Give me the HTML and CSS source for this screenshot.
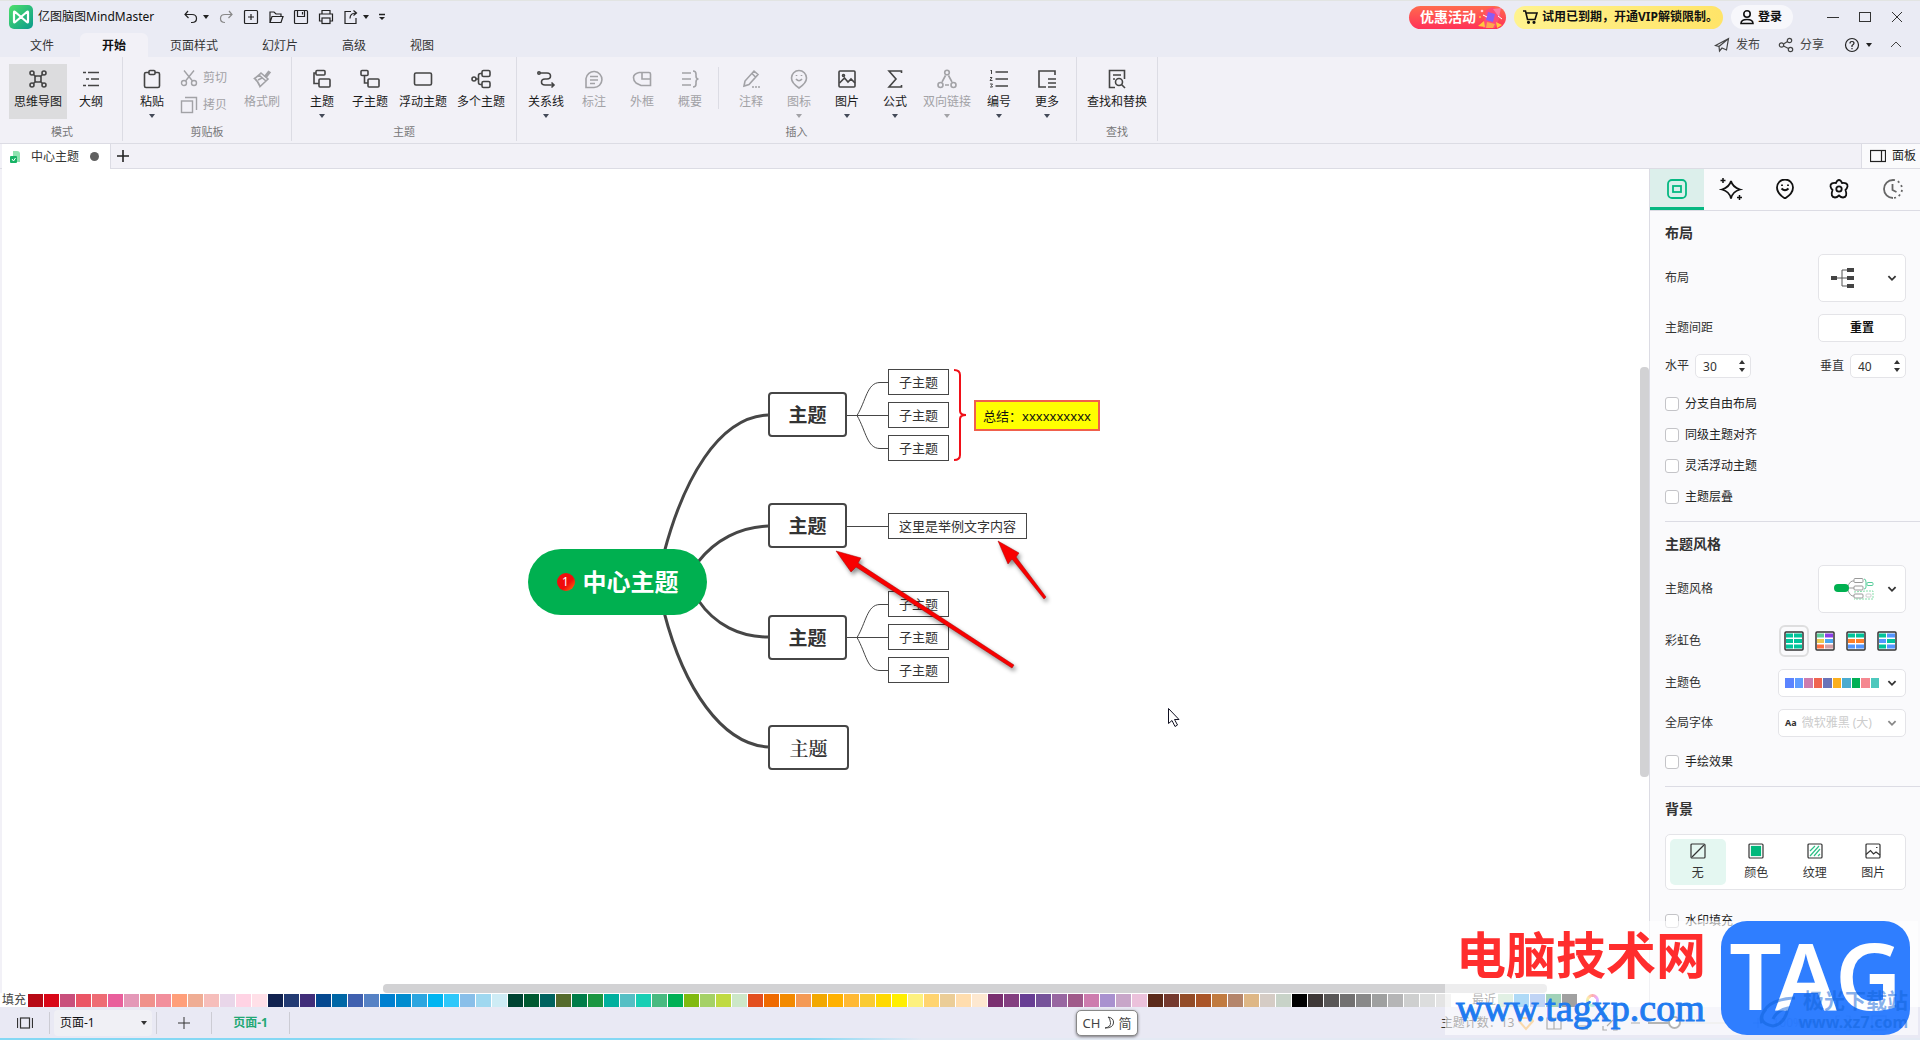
FILE: index.html
```html
<!DOCTYPE html>
<html lang="zh-CN">
<head>
<meta charset="utf-8">
<title>亿图脑图MindMaster</title>
<link rel="stylesheet" href="styles.css">
</head>
<body>
<svg class="defs" aria-hidden="true">
  <symbol id="caret" viewBox="0 0 6 4"><path d="M0 0h6L3 4z" fill="currentColor"/></symbol>
  <symbol id="chev" viewBox="0 0 10 10"><path d="M2 3.500l3 3 3-3" fill="none" stroke="currentColor" stroke-width="1.500"/></symbol>
  <symbol id="picture" viewBox="0 0 20 20"><rect x="2" y="2" width="16" height="16" rx="1"/><circle cx="6.500" cy="6.500" r="1"/><path d="M2.500 14l5-5 3.500 4 3-3 4 4"/></symbol>
</svg>
<div class="app">
  <header class="titlebar">
    <div class="title-row">
      <svg class="logo" viewBox="0 0 24 24"><defs><linearGradient id="lg" x1="0" y1="0" x2="1" y2="1"><stop offset="0" stop-color="#4ee06a"/><stop offset="1" stop-color="#0a9a8c"/></linearGradient></defs><rect width="24" height="24" rx="5" fill="url(#lg)"/><path d="M5 17V7.500q0-1.500 1.200-.5l11.600 10q1.200 1 1.200-.5V7.500q0-1.500-1.200-.5L6.200 17Q5 18 5 16.500z" fill="none" stroke="#fff" stroke-width="2.200" stroke-linejoin="round"/></svg>
      <h1 class="app-name">亿图脑图MindMaster</h1>
      <nav class="quick">
        <button class="qb" aria-label="撤销"><svg class="ic16" viewBox="0 0 16 16"><path d="M5 2L2 5.500 5.500 9M2.500 5.500H9q4.500 0 4.500 4T9 13.500H8"/></svg><svg class="caret"><use href="#caret"/></svg></button>
        <button class="qb dim" aria-label="重做"><svg class="ic16" viewBox="0 0 16 16"><path d="M11 2l3 3.500L10.500 9M13.500 5.500H7q-4.500 0-4.500 4T7 13.500"/></svg></button>
        <button class="qb" aria-label="新建"><svg class="ic16" viewBox="0 0 16 16"><rect x="1.500" y="1.500" width="13" height="13" rx="1"/><path d="M8 5v6M5 8h6"/></svg></button>
        <button class="qb" aria-label="打开"><svg class="ic16" viewBox="0 0 16 16"><path d="M2 13.500V3h4l2 2h5v2.500M2 13.500L4 7.500h11l-2 6z"/></svg></button>
        <button class="qb" aria-label="保存"><svg class="ic16" viewBox="0 0 16 16"><rect x="1.500" y="1.500" width="13" height="13" rx="1"/><path d="M4.500 2v5.500h7V2M9.500 3v2.500"/></svg></button>
        <button class="qb" aria-label="打印"><svg class="ic16" viewBox="0 0 16 16"><path d="M4 5V1.500h8V5M4 12H1.500V5h13v7H12"/><rect x="4" y="9" width="8" height="5.500"/></svg></button>
        <button class="qb" aria-label="导出"><svg class="ic16" viewBox="0 0 16 16"><path d="M8 2.500H2v12h11V9M7 9.500Q7 4 13 4M10.500 1.500L13.500 4l-3 2.500"/></svg><svg class="caret"><use href="#caret"/></svg></button>
        <button class="qb small" aria-label="自定义"><svg class="more-ic" viewBox="0 0 8 8"><path d="M1 1.500h6" /><path d="M1 4h6L4 7z" fill="currentColor" stroke="none"/></svg></button>
      </nav>
      <div class="title-right">
        <button class="promo">优惠活动<svg class="gift" viewBox="0 0 28 23"><path d="M10 4l7-3 8 8-6 13H7z" fill="#ff4b78"/><path d="M12 6l7 2-2 8-7-2z" fill="#8b5cf6"/><path d="M2 20l6-5 1 6zM20 16l6 3-5 3z" fill="#ffc93c"/><path d="M17 3l8-1-2 9z" fill="#ff7ba5"/><circle cx="6" cy="5" r="1.300" fill="#ffd0e0"/><circle cx="4" cy="11" r="1" fill="#ffc93c"/><path d="M11 16l8 2-2 4h-7z" fill="#ffa74c"/><path d="M7 9l4 2M22 10l4 3" stroke="#fff" stroke-width="1"/></svg></button>
        <button class="vip"><svg class="ic16" viewBox="0 0 16 16"><path d="M1 2h2.500l2 8.500H13L15 4H4"/><circle cx="6.500" cy="13.300" r=".8"/><circle cx="12" cy="13.300" r=".8"/></svg>试用已到期，开通VIP解锁限制。</button>
        <button class="login"><svg class="ic16" viewBox="0 0 16 16"><circle cx="8" cy="5" r="3.200"/><path d="M2 14.500q0-4 6-4t6 4z"/></svg>登录</button>
        <button class="win" aria-label="最小化"><svg class="ic12" viewBox="0 0 12 12"><path d="M0 6.500h12"/></svg></button>
        <button class="win" aria-label="最大化"><svg class="ic12" viewBox="0 0 12 12"><rect x=".5" y="1.500" width="11" height="9"/></svg></button>
        <button class="win" aria-label="关闭"><svg class="ic12" viewBox="0 0 12 12"><path d="M1 1l10 10M11 1L1 11"/></svg></button>
      </div>
    </div>
    <div class="menu-row">
      <button class="menu">文件</button><button class="menu on">开始</button><button class="menu w4">页面样式</button><button class="menu w3">幻灯片</button><button class="menu">高级</button><button class="menu">视图</button>
      <div class="menu-right">
        <button class="link"><svg class="ic16" viewBox="0 0 16 16"><path d="M1.500 8.500L14.500 1.500 12.500 13 8 11l-2.500 3-.5-4.500zM5 9.500l9-7.500"/></svg>发布</button>
        <button class="link"><svg class="ic16" viewBox="0 0 16 16"><circle cx="3.500" cy="8" r="2.200"/><circle cx="11.500" cy="3.500" r="2.200"/><circle cx="12.500" cy="12.500" r="2.200"/><path d="M5.500 7l4-2.500M5.500 9l5 2.500"/></svg>分享</button>
        <button class="link help" aria-label="帮助"><svg class="ic16" viewBox="0 0 16 16"><circle cx="8" cy="8" r="6.500"/><path d="M6 6.500q0-2 2-2t2 1.800q0 1-2 2.200V10M8 11v1.200"/></svg><svg class="caret"><use href="#caret"/></svg></button>
        <button class="link" aria-label="折叠"><svg class="ic12" viewBox="0 0 12 12"><path d="M1 8l5-5 5 5"/></svg></button>
      </div>
    </div>
  </header>

  <section class="ribbon">
    <div class="group">
      <div class="tools">
        <button class="tool sel w58"><svg class="ic20" viewBox="0 0 20 20"><rect x="7" y="7" width="6" height="6" rx="1"/><circle cx="4" cy="4" r="2"/><circle cx="16" cy="4" r="2"/><circle cx="4" cy="16" r="2"/><circle cx="16" cy="16" r="2"/><path d="M5.500 5.500L8 8M14.500 5.500L12 8M5.500 14.500L8 12M14.500 14.500L12 12"/></svg><span>思维导图</span></button>
        <button class="tool"><svg class="ic20" viewBox="0 0 20 20"><path d="M2 3.500h3M7 3.500h11M5 10h3M10 10h8M2 16.500h3M7 16.500h11"/></svg><span>大纲</span></button>
      </div><p class="cap">模式</p>
    </div>
    <div class="group">
      <div class="tools">
        <button class="tool"><svg class="ic20" viewBox="0 0 20 20"><rect x="2.500" y="3.500" width="15" height="15" rx="1.500"/><rect x="7" y="1.500" width="6" height="4" rx="1" fill="#f2f1f7"/></svg><span>粘贴</span><svg class="caret"><use href="#caret"/></svg></button>
        <div class="stack">
          <button class="mini dim"><svg class="ic18" viewBox="0 0 18 18"><circle cx="4" cy="14" r="2.500"/><circle cx="14" cy="14" r="2.500"/><path d="M4 1.500l8.500 10.500M14 1.500L5.500 12"/></svg>剪切</button>
          <button class="mini dim"><svg class="ic18" viewBox="0 0 18 18"><rect x="1.500" y="5" width="11" height="11.500"/><path d="M5 1.500h11.500V14"/></svg>拷贝</button>
        </div>
        <button class="tool dim"><svg class="ic20" viewBox="0 0 20 20"><path d="M13 7l3.500-4.500 1.500 1L14.500 8z" fill="currentColor"/><path d="M9 4l7 6-2 2-7-6zM7 6l-4.500 3.500Q6 12 8 17.500l6-5.500M6 11l4-2" stroke-width="1.600"/></svg><span>格式刷</span></button>
      </div><p class="cap">剪贴板</p>
    </div>
    <div class="group topics">
      <div class="tools">
        <button class="tool"><svg class="ic20" viewBox="0 0 20 20"><rect x="4" y="1.500" width="9" height="4.500" rx="1"/><rect x="7" y="10" width="11" height="8" rx="1"/><path d="M4 4H2v10.500h5"/></svg><span>主题</span><svg class="caret"><use href="#caret"/></svg></button>
        <button class="tool"><svg class="ic20" viewBox="0 0 20 20"><rect x="1" y="1.500" width="7" height="5" rx="1"/><rect x="8" y="10" width="11" height="8" rx="1"/><path d="M4.500 6.500V14H8"/></svg><span>子主题</span></button>
        <button class="tool w58"><svg class="ic20" viewBox="0 0 20 20"><rect x="1.500" y="4" width="17" height="12" rx="1.500"/></svg><span>浮动主题</span></button>
        <button class="tool w58"><svg class="ic20" viewBox="0 0 20 20"><rect x="11" y="1.500" width="8" height="6" rx="1.500"/><rect x="11" y="12.500" width="8" height="6" rx="1.500"/><circle cx="3" cy="10" r="2"/><path d="M5 10h2.500M11 4.500H9.500q-2 0-2 2v7q0 2 2 2H11"/></svg><span>多个主题</span></button>
      </div><p class="cap">主题</p>
    </div>
    <div class="group">
      <div class="tools">
        <button class="tool"><svg class="ic20" viewBox="0 0 20 20"><circle cx="3" cy="4" r="1.200"/><path d="M4 4h7q3.500 0 3.500 3T11 10H9q-3.500 0-3.500 3T9 16h9M15.500 13.500L18 16l-2.500 2.500"/></svg><span>关系线</span><svg class="caret"><use href="#caret"/></svg></button>
        <button class="tool dim"><svg class="ic20" viewBox="0 0 20 20"><path d="M2 18.500V9.500a8 8 0 1 1 8 9zM6 7.500h8M6 11h8M6 14.500h5"/></svg><span>标注</span></button>
        <button class="tool dim"><svg class="ic20" viewBox="0 0 20 20"><path d="M7 3.500h10q1.500 0 1.500 1.500v11.500H9L4 14q-2.500-2-2.500-5.500T7 3.500M10 4v6h8"/></svg><span>外框</span></button>
        <button class="tool dim"><svg class="ic20" viewBox="0 0 20 20"><path d="M2 4h9M2 10h9M2 16h9M13 2q3 0 3 3v2q0 3 2.500 3Q16 10 16 13v2q0 3-3 3"/></svg><span>概要</span></button>
        <i class="split"></i>
        <button class="tool dim"><svg class="ic20" viewBox="0 0 20 20"><path d="M3 17l1-5 9-10 4 3.500-9 10zM11 4.500L14.500 8M11 18h2M14 18h2M17 18h2"/></svg><span>注释</span></button>
        <button class="tool dim"><svg class="ic20" viewBox="0 0 20 20"><path d="M10 19q-7.500-5-7.500-10a7.500 7.500 0 0 1 15 0q0 5-7.500 10zM7 10q3 3.500 6 0M7.500 6v1M12.500 6v1"/></svg><span>图标</span><svg class="caret"><use href="#caret"/></svg></button>
        <button class="tool"><svg class="ic20"><use href="#picture"/></svg><span>图片</span><svg class="caret"><use href="#caret"/></svg></button>
        <button class="tool"><svg class="ic20" viewBox="0 0 20 20"><path d="M16.500 4V2H4l7 8-7 8h12.500v-2"/></svg><span>公式</span><svg class="caret"><use href="#caret"/></svg></button>
        <button class="tool dim w56"><svg class="ic20" viewBox="0 0 20 20"><circle cx="10" cy="3.500" r="2.300"/><circle cx="3.500" cy="16" r="2.500"/><circle cx="16.500" cy="16" r="2.500"/><path d="M8.500 6.500L5 13M11.500 6.500L15 13M8 16h4"/></svg><span>双向链接</span><svg class="caret"><use href="#caret"/></svg></button>
        <button class="tool"><svg class="ic20" viewBox="0 0 20 20"><path d="M6.500 3H19M6.500 10H19M6.500 17H19"/><path d="M1.500 2l1-1v4M1 8.500h2l-2 3h2.500M1 15h2.500l-1 1.500 1 1.500H1" stroke-width="1"/></svg><span>编号</span><svg class="caret"><use href="#caret"/></svg></button>
        <button class="tool"><svg class="ic20" viewBox="0 0 20 20"><path d="M18 6V2H2v16h7M11 10h8M11 14h8M11 18h8"/></svg><span>更多</span><svg class="caret"><use href="#caret"/></svg></button>
      </div><p class="cap">插入</p>
    </div>
    <div class="group">
      <div class="tools">
        <button class="tool w64"><svg class="ic20" viewBox="0 0 20 20"><path d="M8 18.500H2.500v-17h15V10M6 6h8M6 10h2"/><circle cx="12" cy="13" r="3.500"/><path d="M14.500 15.500l3.500 3.500"/></svg><span>查找和替换</span></button>
      </div><p class="cap">查找</p>
    </div>
  </section>

  <div class="doc-tabs">
    <button class="doc"><svg class="doc-ic" viewBox="0 0 12 14"><path d="M4 1h4q3 0 3 3v8H4z" fill="#8fe3b0"/><rect x="1" y="6" width="7" height="7" rx="1" fill="#16b365"/><path d="M3 9l1.500 2L6.500 8" stroke="#fff" fill="none"/></svg>中心主题<i class="dot"></i></button>
    <button class="add" aria-label="新建标签"><svg class="ic12" viewBox="0 0 12 12"><path d="M6 0v12M0 6h12"/></svg></button>
    <button class="panel-toggle"><svg class="ic16" viewBox="0 0 16 16"><rect x=".5" y="2.500" width="15" height="11"/><path d="M11.500 2.500v11"/></svg>面板</button>
  </div>

  <main class="work">
    <div class="left">
      <div class="canvas">
        <svg class="wires" width="1200" height="700">
          <g fill="none" stroke="#464646" stroke-width="3">
            <path d="M664 384C683 312 718 248 768 246M698 393C715 371 740 358 768 357M698 431C715 456 740 468 768 468M664 443C684 520 722 575 768 578"/>
          </g>
          <g fill="none" stroke="#464646">
            <path d="M846 246.500h42M857 246.500C866 232 867 213.500 880 213.500h8M857 246.500C866 262 867 279.500 880 279.500h8M846 357.500h42M846 468.500h42M857 468.500C866 454 867 435.500 880 435.500h8M857 468.500C866 484 867 501.500 880 501.500h8"/>
          </g>
          <path d="M954 201q6 0 6 5v36q0 4 6 4-6 0-6 4v36q0 5-6 5" fill="none" stroke="#f01018" stroke-width="2"/>
        </svg>
        <div class="node root"><span class="num">1</span>中心主题</div>
        <div class="node topic t1">主题</div><div class="node topic t2">主题</div><div class="node topic t3">主题</div><div class="node topic t4">主题</div>
        <div class="node sub s1">子主题</div><div class="node sub s2">子主题</div><div class="node sub s3">子主题</div>
        <div class="node sub s4">这里是举例文字内容</div>
        <div class="node sub s5">子主题</div><div class="node sub s6">子主题</div><div class="node sub s7">子主题</div>
        <div class="node summary">总结：xxxxxxxxxx</div>
        <svg class="wires marks" width="1200" height="700">
          <g fill="#f80000" stroke="#a00" stroke-width=".5">
            <path d="M836 382l25 7-3 5 156 102-2 3-156-101-5 5z"/>
            <path d="M998 372l21 12-3 4 30 40-2 2-32-40-4 5z"/>
          </g>
        </svg>
        <svg class="wires" width="1200" height="700"><path d="M1168.500 539.500v15l3.500-3 3 6 2.500-1.500-3-5.500h4.500z" fill="#fff" stroke="#112"/></svg>
        <i class="bar-v"></i><i class="bar-h"></i>
      </div>
      <div class="palette"><span class="pal-label">填充</span><div class="swatches" id="fills"></div><span class="pal-label">最近</span><div class="swatches" id="recent"></div><i class="wheel"></i></div>
    </div>

    <aside class="panel">
      <nav class="ptabs">
        <button class="ptab on" aria-label="布局"><svg class="ic20" viewBox="0 0 20 20"><rect x="1" y="1" width="18" height="18" rx="4"/><rect x="6" y="7" width="8" height="6"/></svg></button>
        <button class="ptab" aria-label="AI"><svg class="ic24" viewBox="0 0 24 24"><path d="M12 4q1.500 6 9 8.500-7.500 2-9 9-1.500-7-9-9 7.500-2.500 9-8.500z"/><path d="M4 1v5M1.500 3.500h5M20.500 18v5M18 20.500h5" stroke-width="1.500"/></svg></button>
        <button class="ptab" aria-label="图标"><svg class="ic20" viewBox="0 0 20 20"><path d="M10 19.500q-8-5-8-11a8 8 0 0 1 16 0q0 6-8 11zM6.500 9.500q3.500 3.500 7 0M7 5.500v1.500M13 5.500v1.500"/></svg></button>
        <button class="ptab" aria-label="样式"><svg class="ic20" viewBox="0 0 20 20"><path d="M10 1q1.800 0 3 3 6-.500 5.500 3.500-.5 2-2 3.500 2.500 7-2.500 7.500-2 0-4-2-2 2-4 2-5-.500-2.500-7.500-1.500-1.500-2-3.500Q1 3.500 7 4q1.200-3 3-3z"/><circle cx="10" cy="10" r="2.700"/></svg></button>
        <button class="ptab gray" aria-label="历史"><svg class="ic20" viewBox="0 0 20 20"><path d="M10 1a9 9 0 0 0 0 18"/><path d="M10 1a9 9 0 0 1 0 18" stroke-dasharray="2 3"/><path d="M9.500 5v6l4 2"/></svg></button>
      </nav>
      <section class="sec">
        <h2>布局</h2>
        <div class="row big"><span>布局</span><button class="picker" aria-label="选择布局"><svg class="lay" viewBox="0 0 24 22"><path d="M5 11h12M17 3h-6v16h6" fill="none" stroke="#555"/><g fill="#444"><rect y="9" width="6" height="4"/><rect x="16" y="1" width="7" height="4"/><rect x="16" y="9" width="7" height="4"/><rect x="16" y="17" width="7" height="4"/></g></svg><svg class="chev"><use href="#chev"/></svg></button></div>
        <div class="row"><span>主题间距</span><button class="reset">重置</button></div>
        <div class="row spin-row">
          <label for="hz">水平</label><span class="spin"><input id="hz" type="number" value="30"><i class="ud"></i></span>
          <label for="vt" class="push">垂直</label><span class="spin"><input id="vt" type="number" value="40"><i class="ud"></i></span>
        </div>
        <div class="checks">
          <label><input type="checkbox">分支自由布局</label>
          <label><input type="checkbox">同级主题对齐</label>
          <label><input type="checkbox">灵活浮动主题</label>
          <label><input type="checkbox">主题层叠</label>
        </div>
      </section>
      <section class="sec">
        <h2>主题风格</h2>
        <div class="row big"><span>主题风格</span><button class="picker" aria-label="选择主题风格"><svg class="sty" viewBox="0 0 40 24"><path d="M13 11Q16 3 20 4M13 11h7M13 11q3 9 7 8" fill="none" stroke="#999"/><rect y="7" width="15" height="8" rx="4" fill="#00b050"/><g fill="#fff" stroke="#999"><rect x="20" y="1.500" width="9" height="4" rx="1"/><rect x="20" y="9" width="9" height="4" rx="1"/><rect x="20" y="17" width="9" height="4" rx="1"/></g><path d="M30 2q2 0 2 3v5q0 2-2 2" fill="none" stroke="#5c9"/><rect x="33" y="5.500" width="6" height="3" rx="1" fill="none" stroke="#5c9"/><path d="M20 15l12-1h7v8H20" fill="none" stroke="#8da" stroke-dasharray="2 1"/><rect x="32" y="17" width="5" height="3" rx="1" fill="none" stroke="#ccc"/></svg><svg class="chev"><use href="#chev"/></svg></button></div>
        <div class="row rain"><span>彩虹色</span>
          <div class="rains">
            <button class="rb on" aria-label="单色"><svg viewBox="0 0 20 20"><rect class="fr" x="1" y="1" width="18" height="18" rx="1"/><path stroke="#00c49a" d="M2 4.500h7M10 4.500h8M2 10h7M10 10h8M2 15.500h7M10 15.500h8"/></svg></button>
            <button class="rb" aria-label="彩虹"><svg viewBox="0 0 20 20"><rect class="fr" x="1" y="1" width="18" height="18" rx="1"/><path stroke="#5bcf9a" d="M2 4.500h7"/><path stroke="#8a3fe8" d="M10 4.500h8"/><path stroke="#ecc850" d="M2 10h7"/><path stroke="#4aa8f0" d="M10 10h8"/><path stroke="#ff7040" d="M2 15.500h7"/><path stroke="#d5a0a8" d="M10 15.500h8"/></svg></button>
            <button class="rb" aria-label="按行"><svg viewBox="0 0 20 20"><rect class="fr" x="1" y="1" width="18" height="18" rx="1"/><path stroke="#00c49a" d="M2 4.500h7M10 4.500h8"/><path stroke="#ff7f2a" d="M2 10h7M10 10h8"/><path stroke="#5396ff" d="M2 15.500h7M10 15.500h8"/></svg></button>
            <button class="rb" aria-label="交错"><svg viewBox="0 0 20 20"><rect class="fr" x="1" y="1" width="18" height="18" rx="1"/><path stroke="#00c49a" d="M2 4.500h7M10 10h8M2 15.500h7"/><path stroke="#5396ff" d="M10 4.500h8M2 10h7M10 15.500h8"/></svg></button>
          </div>
        </div>
        <div class="row"><span>主题色</span><button class="colorbox" aria-label="选择主题色"><span class="strip" id="strip"></span><svg class="chev"><use href="#chev"/></svg></button></div>
        <div class="row last-row"><label for="font">全局字体</label><span class="fontbox"><b>Aa</b><select id="font" disabled><option>微软雅黑 (大)</option></select><svg class="chev"><use href="#chev"/></svg></span></div>
        <div class="checks"><label><input type="checkbox">手绘效果</label></div>
      </section>
      <section class="sec">
        <h2>背景</h2>
        <div class="seg">
          <button class="on"><svg class="ic16" viewBox="0 0 16 16"><rect x="1" y="1" width="14" height="14" rx="1"/><path d="M2 14L14 2"/></svg>无</button>
          <button><svg class="ic16" viewBox="0 0 16 16"><rect x="1" y="1" width="14" height="14" rx="1"/><rect x="3.500" y="3.500" width="9" height="9" fill="#00b87c" stroke="#00b87c"/></svg>颜色</button>
          <button><svg class="ic16" viewBox="0 0 16 16"><rect x="1" y="1" width="14" height="14" rx="1"/><path stroke="#2fbf86" d="M3 8l5-5M3 13L12 3M7 13l6-7M11 13l2-2"/></svg>纹理</button>
          <button><svg class="ic16" viewBox="0 0 16 16"><rect x="1" y="1" width="14" height="14" rx="1"/><path d="M1 11.500l4.500-4 3 3.500 2.500-2 4 3M11 4.500h1.500"/></svg>图片</button>
        </div>
        <div class="checks last"><label><input type="checkbox">水印填充</label></div>
      </section>
    </aside>
  </main>

  <footer class="status">
    <button class="st-ic" aria-label="页面列表"><svg class="ic16" viewBox="0 0 16 16"><path d="M.5 3v10M15.500 3v10"/><rect x="3.500" y="3" width="9" height="10"/></svg></button>
    <div class="page-sel"><select aria-label="页面"><option>页面-1</option></select><svg class="caret"><use href="#caret"/></svg></div>
    <button class="st-add" aria-label="添加页面"><svg class="ic12" viewBox="0 0 12 12"><path d="M6 0v12M0 6h12"/></svg></button>
    <button class="page-tab">页面-1</button>
    <div class="st-right">
      <span class="count">主题计数：13</span>
      <svg class="ic16" viewBox="0 0 16 16"><path d="M3 3h10l2 3-7 8-7-8z" fill="none" stroke="#f0a030" stroke-width="2"/></svg>
      <svg class="ic16 gap1" viewBox="0 0 16 16"><path d="M1 3h6l1 1 1-1h6v11H1zM8 4v10"/></svg>
      <svg class="ic16 gap1" viewBox="0 0 16 16"><rect x="2" y="3" width="12" height="8"/><path d="M5 14h9"/></svg>
      <svg class="ic16 gap1" viewBox="0 0 16 16"><path d="M1 5V1h4M11 1h4v4M15 11v4h-4M5 15H1v-4M5 11l6-6"/></svg>
      <svg class="ic12 gap1" viewBox="0 0 12 12"><path d="M1 6h9"/></svg>
      <input class="zoom" type="range" min="0" max="100" value="24" aria-label="缩放">
      <svg class="ic12" viewBox="0 0 12 12"><path d="M6 1v10M1 6h10"/></svg>
      <span class="pct">100%</span><svg class="caret"><use href="#caret"/></svg>
      <svg class="ic16 gap2" viewBox="0 0 16 16"><path d="M1 5V1h4M11 1h4v4M15 11v4h-4M5 15H1v-4"/></svg>
      <svg class="ic16 gap2" viewBox="0 0 16 16"><rect x="1" y="1" width="14" height="14"/><path d="M4 8h8"/></svg>
    </div>
  </footer>

  <div class="ime">CH<svg class="moon" viewBox="0 0 12 14"><path d="M5 1q6 1 5.500 6T2 12q6-1 5.500-5.500T5 1z"/></svg>简</div>
  <div class="mark">
    <div class="mark-text"><strong>电脑技术网</strong><span>www.tagxp.com</span></div>
    <div class="mark-logo">TAG<svg class="swirl" viewBox="0 0 40 36"><path d="M36 3Q12 4 5 16t9 15q12-2 15-18Q18 15 14 24M3 28q-3-6 4-14" fill="none" stroke="#0f62d8" stroke-width="3"/></svg><div class="ghost"><b>极光下载站</b><b>www.xz7.com</b></div></div>
  </div>
</div>
<script src="palette.js"></script>
</body>
</html>
```
FILE: palette.js
```js
const sets = {
  fills: "b70915 d90718 c94f7c eb5566 ee6c75 e95f9c e498b8 f0918c f28f9c ff9f7a efad94 f6bebb e9d6e9 ffd3e4 ffe0e8 11224f 233b73 412e79 054990 0067a6 4060af 5682c5 0080d0 008ccf 2ca6e0 00b5f1 2fc8fa 89bfe9 9fd8f0 ceecf5 004432 005a31 00635f 556b2c 007d49 1b9641 00b09e 55bfc4 18cfb4 48ba80 00b055 80ba10 a5d166 c0da41 cde7c8 e34f1f ef6a00 f38a00 f49a55 f2a800 ffb100 ffb934 facb32 ffd900 ffef00 fdf17f ffd470 ebcd97 ffddae fde8d0 7a3070 833f80 683f94 76539a 9867a1 a05a8a cd7cae a991cf c8a6c9 ebc1db 5b2a1a 753a2f 934c28 aa5528 c17b40 b4856b deb786 d5ccc5 c8d3c8 000000 3e3837 595757 727171 898989 9fa0a0 b5b5b6 cecfcf dcdddd e4e4e4 ffffff",
  recent: "b4d9bb 39a2ec 6193e7 149050 141414",
  strip: "5b84ff 5f9dff cd7cae f0644f 6a74b8 fbaf1d 4bacd0 00b055 f58890 4dc8bd"
};
for (const [id, list] of Object.entries(sets)) {
  const box = document.getElementById(id);
  for (const c of list.split(" ")) {
    const el = document.createElement("i");
    el.style.background = "#" + c;
    box.append(el);
  }
}
```
FILE: styles.css
```css
* { box-sizing: border-box; }
body { margin: 0; font: 12px/16px "Noto Sans", "Noto Sans CJK SC", sans-serif; color: #222; }
button { border: 0; background: none; padding: 0; margin: 0; font: inherit; color: inherit; }
h1, h2, p { margin: 0; font-weight: normal; }
.defs { position: absolute; width: 0; height: 0; }
svg { fill: none; stroke: currentColor; flex: none; display: block; }
.caret { width: 6px; height: 4px; stroke: none; }
.chev { width: 12px; height: 12px; color: #333; }
.ic12 { width: 12px; height: 12px; }
.ic16 { width: 16px; height: 16px; stroke-width: 1.2; }
.ic18 { width: 18px; height: 18px; stroke-width: 1.4; }
.ic20 { width: 20px; height: 20px; stroke-width: 1.6; }
.ic24 { width: 24px; height: 24px; stroke-width: 2; }
.app { position: relative; min-height: 100vh; display: flex; flex-direction: column; background: #eaeaf4; overflow: hidden; }

.titlebar { background: #eaebf4; border-top: 1px solid #e2e4e2; }
.title-row { display: flex; align-items: center; height: 32px; padding-left: 9px; }
.logo { width: 24px; height: 24px; stroke: none; }
.app-name { font-size: 12px; color: #111; margin-left: 5px; width: 145px; white-space: nowrap; }
.quick { display: flex; gap: 9px; color: #222; }
.qb { display: flex; align-items: center; gap: 4px; }
.qb.dim { color: #888; }
.more-ic { width: 8px; height: 8px; stroke-width: 1.5; }
.title-right { margin-left: auto; display: flex; align-items: center; gap: 8px; padding-right: 11px; font-weight: bold; color: #111; }
.promo { display: flex; align-items: center; width: 97px; height: 23px; border-radius: 12px; padding-left: 11px; font-size: 14px; color: #fff; background: linear-gradient(#ff6a4d, #ff3158); overflow: hidden; white-space: nowrap; }
.gift { width: 28px; height: 23px; stroke: none; }
.vip { display: flex; align-items: center; gap: 4px; width: 209px; height: 23px; border-radius: 12px; padding-left: 8px; background: linear-gradient(90deg, #fff38f, #ffe468); white-space: nowrap; }
.login { display: flex; align-items: center; gap: 3px; width: 62px; height: 24px; border-radius: 12px; padding-left: 8px; background: #f7f7fb; }
.login .ic16, .vip .ic16 { stroke-width: 1.6; }
.win { width: 24px; height: 24px; display: grid; place-items: center; color: #333; }
.login + .win { margin-left: 20px; }
.menu-row { display: flex; height: 24px; padding-left: 4px; }
.menu { width: 68px; padding-top: 2px; border-radius: 6px 6px 0 0; color: #333; }
.menu:first-child { width: 76px; }
.menu.w4 { width: 92px; }
.menu.w3 { width: 80px; }
.menu.on { background: #f2f1f7; font-weight: bold; color: #111; }
.menu-right { margin-left: auto; display: flex; align-items: center; gap: 18px; padding-right: 18px; color: #444; }
.link { display: flex; align-items: center; gap: 6px; }
.link.help { color: #222; margin-left: 2px; }

.ribbon { display: flex; height: 87px; background: #f2f1f7; border-bottom: 1px solid #dcdce4; }
.group { display: flex; flex-direction: column; padding: 7px 5px 0; border-right: 1px solid #dcdce4; margin-bottom: 2px; }
.group.topics { padding: 7px 6px 0; }
.group:first-child { padding: 7px 7px 0 9px; }
.group:last-child { padding: 7px 8px 0; }
.tools { display: flex; height: 56px; }
.tool { width: 48px; height: 55px; padding-top: 5px; display: flex; flex-direction: column; align-items: center; color: #444; white-space: nowrap; }
.tool span { margin-top: 5px; color: #1a1a1a; }
.tool .caret { margin-top: 4px; color: #444a58; }
.tool.dim, .tool.dim span, .tool.dim .caret, .mini.dim { color: #a2a2a6; }
.tool.sel { background: #dcdcde; }
.w56 { width: 56px; } .w58 { width: 58px; } .w64 { width: 64px; }
.cap { text-align: center; font-size: 11px; margin-top: 4px; color: #777; }
.stack { width: 62px; padding: 5px 0 0 4px; display: flex; flex-direction: column; gap: 9px; }
.mini { display: flex; align-items: center; gap: 5px; height: 18px; }
.split { width: 1px; height: 42px; margin: 3px 8px 0 4px; background: #dcdce4; }

.doc-tabs { display: flex; height: 25px; background: #f2f1f7; border-bottom: 1px solid #dcdce4; padding-left: 2px; }
.doc { display: flex; align-items: center; width: 109px; height: 25px; background: #fff; border-right: 1px solid #dcdce4; padding-left: 7px; color: #333; }
.doc-ic { width: 12px; height: 14px; margin-right: 10px; stroke: none; }
.dot { width: 9px; height: 9px; border-radius: 50%; background: #606060; margin-left: 11px; }
.add { width: 24px; display: grid; place-items: center; color: #222; }
.add svg { stroke-width: 1.6; }
.panel-toggle { margin-left: auto; display: flex; align-items: center; gap: 6px; width: 59px; padding-left: 8px; background: #fafafc; border-left: 1px solid #dcdce4; white-space: nowrap; }

.work { flex: 1; display: flex; background: #fff; }
.left { flex: 1; min-width: 0; display: flex; flex-direction: column; }
.canvas { position: relative; flex: 1; overflow: hidden; border-left: 2px solid #f2f1f7; }
.wires { position: absolute; left: -2px; top: 0; stroke: none; }
.marks { filter: drop-shadow(2px 3px 2px rgba(0,0,0,.45)); }
.node { position: absolute; display: flex; align-items: center; justify-content: center; background: #fff; white-space: nowrap; }
.root { left: 526px; top: 380px; width: 179px; height: 66px; border-radius: 33px; background: #00b050; color: #fff; font-size: 24px; font-weight: bold; gap: 8px; }
.num { display: grid; place-items: center; width: 18px; height: 18px; border-radius: 50%; background: linear-gradient(135deg, #f00c0c 60%, #ff7a10); font-size: 12px; font-weight: normal; }
.topic { left: 766px; width: 79px; height: 45px; border: 2px solid #464646; border-radius: 4px; font-size: 19px; font-weight: bold; color: #333; }
.t1 { top: 223px; } .t2 { top: 334px; } .t3 { top: 446px; }
.t4 { top: 556px; width: 81px; font-weight: 600; font-family: "Noto Serif CJK SC", "Liberation Serif", serif; }
.sub { left: 886px; width: 61px; height: 26px; border: 1px solid #464646; font-size: 13px; color: #333; }
.s1 { top: 200px; } .s2 { top: 233px; } .s3 { top: 266px; }
.s4 { top: 344px; width: 139px; }
.s5 { top: 422px; } .s6 { top: 455px; } .s7 { top: 488px; }
.summary { left: 972px; top: 231px; width: 126px; height: 31px; background: #ff0; border: 2px solid #f0604c; font-size: 13px; color: #111; }
.bar-v { position: absolute; right: 0; top: 198px; bottom: 216px; width: 9px; border-radius: 4px; background: #d2d2d4; }
.bar-h { position: absolute; left: 381px; right: 102px; bottom: 0; height: 9px; border-radius: 4px; background: #d2d2d4; }
.palette { display: flex; align-items: center; height: 14px; padding-left: 2px; }
.pal-label { width: 26px; line-height: 14px; color: #444; white-space: nowrap; }
.swatches { display: flex; }
.swatches i { width: 15px; height: 13px; margin-right: 1px; }
#fills + .pal-label { margin-left: 4px; }
.wheel { width: 13px; height: 13px; margin-left: 8px; border-radius: 50%; background: radial-gradient(circle, #fff 35%, transparent 40%), conic-gradient(#f33, #c3f, #36f, #3cc, #6d3, #fc3, #f33); }

.panel { width: 271px; background: #fafafc; border-left: 1px solid #dcdce4; color: #333; }
.ptabs { display: flex; height: 42px; border-bottom: 1px solid #dcdce4; color: #111; }
.ptab { flex: 1; display: grid; place-items: center; padding-top: 2px; border-bottom: 3px solid transparent; }
.ptab svg { stroke-width: 1.8; }
.ptab.on { background: #dcefeb; color: #06b882; border-color: #06b882; }
.ptab.gray { color: #666; }
.sec { margin-left: 15px; padding-right: 14px; border-bottom: 1px solid #dcdce4; }
.sec:last-child { border: 0; }
h2 { font-size: 14px; line-height: 43px; font-weight: bold; }
.row { display: flex; align-items: center; justify-content: space-between; height: 28px; margin-bottom: 12px; }
.row.big { height: 48px; }
.row.rain { height: 32px; }
.picker, .reset, .spin, .colorbox, .fontbox, .seg { background: #fff; border: 1px solid #e4e4e8; border-radius: 5px; }
.picker { width: 88px; height: 48px; padding: 0 7px 0 12px; display: flex; align-items: center; justify-content: space-between; }
.lay { width: 24px; height: 22px; stroke: none; }
.sty { width: 40px; height: 24px; margin-left: 3px; stroke: none; }
.reset { width: 88px; height: 28px; font-weight: bold; color: #111; }
.spin-row { height: 24px; justify-content: flex-start; gap: 6px; margin-bottom: 10px; }
.push { margin-left: auto; }
.spin { position: relative; width: 56px; height: 24px; }
.spin input { width: 36px; height: 22px; border: 0; padding: 0 0 0 7px; background: none; font: inherit; color: inherit; appearance: textfield; }
.spin input::-webkit-inner-spin-button { appearance: none; }
.ud::before, .ud::after { content: ""; position: absolute; right: 5px; border: 3px solid transparent; }
.ud::before { top: 2px; border-bottom: 4px solid #333; }
.ud::after { bottom: 2px; border-top: 4px solid #333; }
.checks { display: flex; flex-direction: column; margin-bottom: 9px; }
.checks label { display: flex; align-items: center; gap: 6px; height: 31px; color: #222; }
.checks input { appearance: none; width: 14px; height: 14px; margin: 0; border: 1px solid #c4c4c8; border-radius: 3px; background: #fff; }
.rains { display: flex; gap: 1px; padding-right: 4px; }
.rb { width: 30px; height: 32px; display: grid; place-items: center; border: 2px solid transparent; border-radius: 6px; }
.rb.on { border-color: #dededf; }
.rb svg { width: 20px; height: 20px; stroke-width: 4; }
.fr { fill: #fff; stroke: #333; stroke-width: 1.5; }
.colorbox, .fontbox { width: 128px; height: 28px; display: flex; align-items: center; padding: 0 7px 0 6px; }
.colorbox { justify-content: space-between; }
.strip { display: flex; gap: 1px; }
.strip i { width: 8px; height: 10px; }
.strip i:nth-child(odd) { width: 9px; }
.fontbox b { font-size: 9px; }
.fontbox select { flex: 1; min-width: 0; appearance: none; border: 0; background: none; padding: 0 0 0 5px; font: inherit; color: #ccc; opacity: 1; }
.fontbox .chev { color: #888; }
.row.last-row { margin-bottom: 9px; }
.seg { display: flex; height: 56px; margin-top: 4px; padding: 4px 1px 4px 4px; }
.seg button { width: 56px; margin-right: 3px; border-radius: 5px; display: flex; flex-direction: column; align-items: center; justify-content: center; gap: 6px; }
.seg .on { background: #e4f7f1; }
.checks.last { margin-top: 15px; }

.status { display: flex; align-items: center; height: 33px; background: #e9e9f4; border-bottom: 2px solid; border-image: linear-gradient(90deg, #84d8f4 42%, #e4eaf4 48%) 1; color: #333; }
.st-ic { width: 50px; height: 22px; display: grid; place-items: center; border-right: 1px solid #ccccd4; }
.page-sel { display: flex; align-items: center; width: 98px; height: 26px; margin: 0 4px; padding-right: 5px; background: #f0f0f5; border-radius: 4px; }
.page-sel select { flex: 1; appearance: none; border: 0; background: none; padding: 0 0 0 6px; font: inherit; color: #111; }
.st-add { width: 56px; height: 22px; display: grid; place-items: center; border: solid #ccccd4; border-width: 0 1px; }
.page-tab { width: 78px; height: 22px; font-weight: bold; color: #22a874; border-right: 1px solid #ccccd4; }
.st-right { margin-left: auto; display: flex; align-items: center; padding-right: 33px; }
.count { margin-right: 4px; }
.gap1 { margin-left: 12px; }
.gap2 { margin-left: 20px; }
.zoom { appearance: none; width: 96px; height: 14px; margin: 0 8px 0 6px; background: linear-gradient(90deg, #444 28%, #ddd 28%) center / 100% 2px no-repeat; }
.zoom::-webkit-slider-thumb { appearance: none; width: 13px; height: 13px; border: 2px solid #444; border-radius: 50%; background: #fff; }
.pct { margin: 0 6px 0 8px; }
.ime { position: absolute; right: 782px; bottom: 4px; width: 62px; height: 26px; display: flex; align-items: center; justify-content: center; gap: 3px; border: 1px solid #888; border-radius: 5px; background: #fff; box-shadow: 0 1px 3px rgba(0,0,0,.5); font-size: 13px; color: #444; }
.moon { width: 12px; height: 14px; }
.mark { position: absolute; right: 2px; bottom: 5px; width: 473px; height: 114px; display: flex; justify-content: space-between; padding: 0 8px 0 11px; background: rgba(255,255,255,.6); }
.mark-text { display: flex; flex-direction: column; white-space: nowrap; }
.mark-text strong { font: bold 50px/62px "Noto Sans CJK SC", sans-serif; color: #ff2d2d; }
.mark-text span { font: 38px/50px "Liberation Serif", serif; color: #1f7bf0; -webkit-text-stroke: 1px #1f7bf0; }
.mark-logo { position: relative; width: 189px; border-radius: 26px; background: rgba(34, 118, 255, .94); color: #fff; font: 600 92px/108px "Noto Sans", sans-serif; text-align: center; }
.ghost { position: absolute; right: 2px; bottom: 2px; display: flex; flex-direction: column; align-items: flex-end; font: 16px/22px "Noto Sans", "Noto Sans CJK SC", sans-serif; color: rgba(15, 98, 216, .5); }
.ghost b:first-child { font-size: 21px; }
.swirl { position: absolute; left: 38px; bottom: 4px; width: 40px; height: 36px; opacity: .5; }
```
